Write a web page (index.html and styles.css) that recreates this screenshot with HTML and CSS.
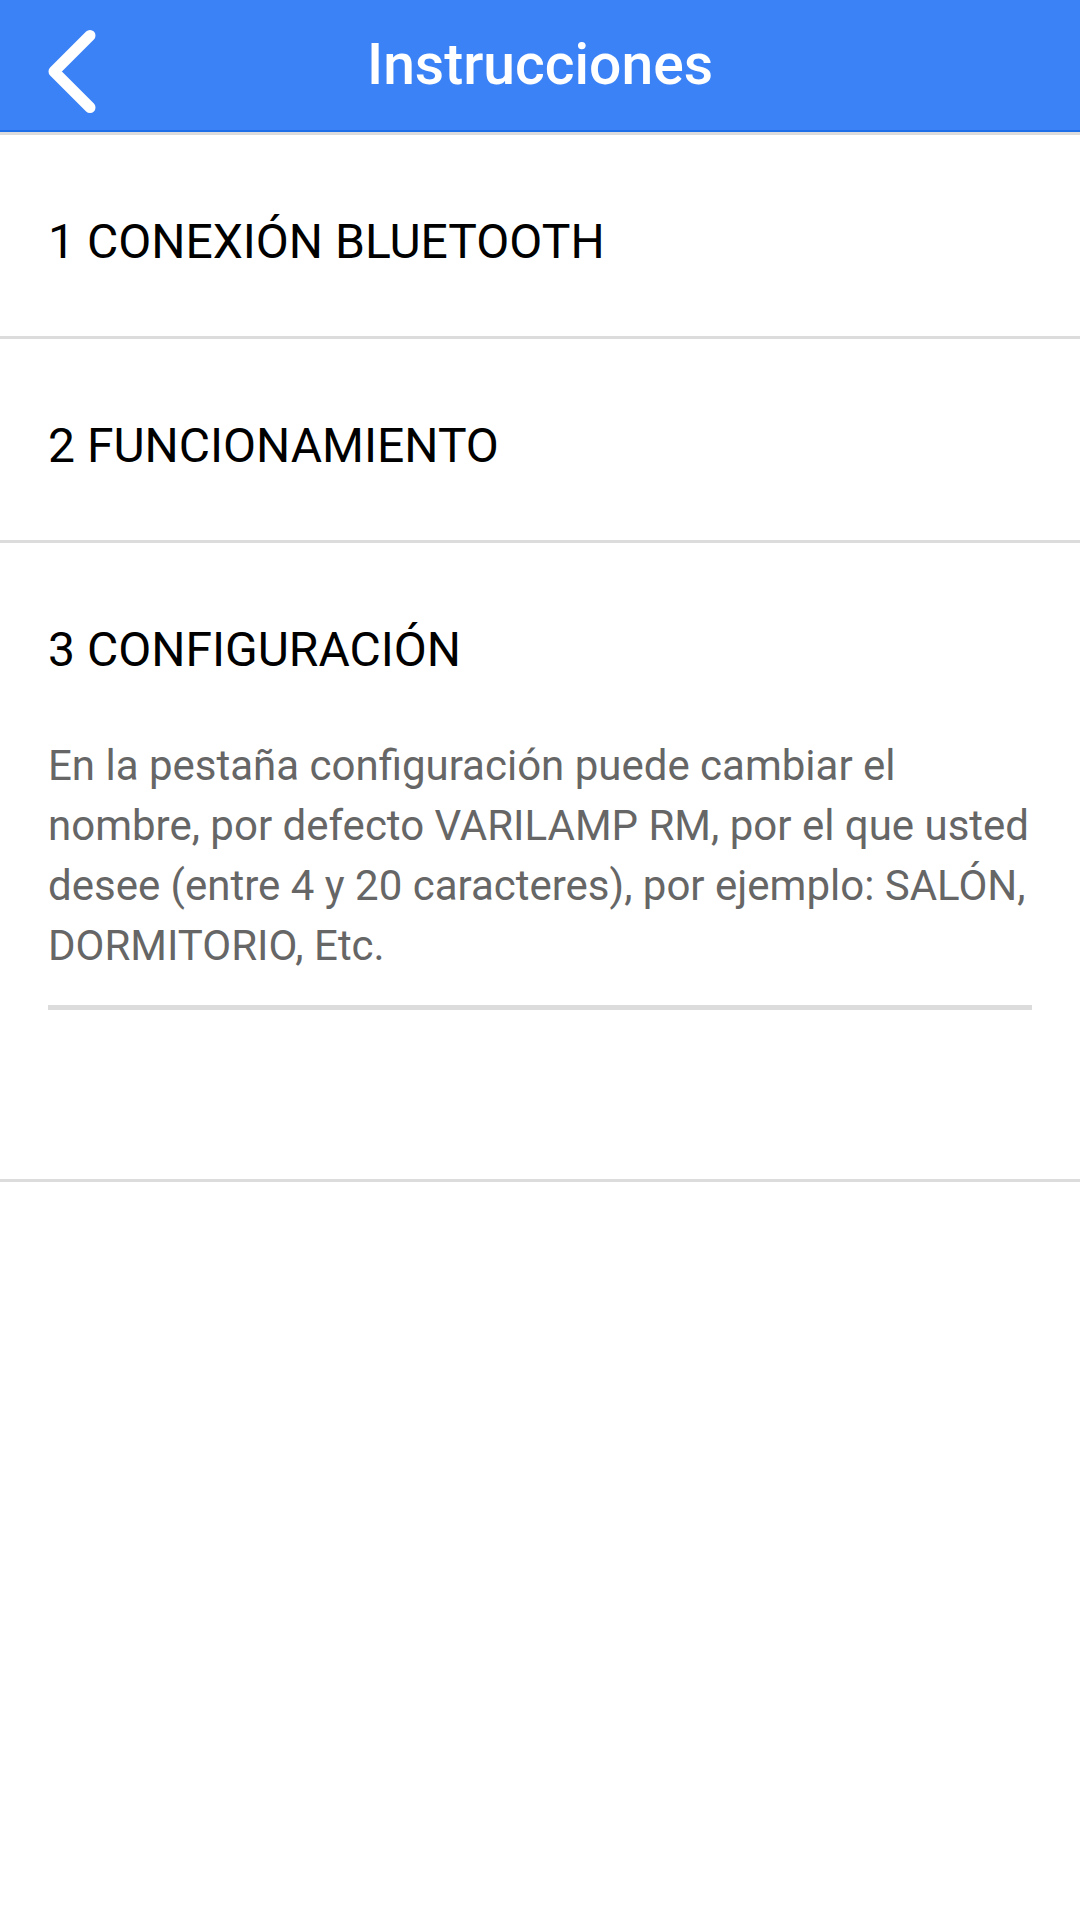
FILE: index.html
```html
<!DOCTYPE html>
<html lang="es">
<head>
<meta charset="utf-8">
<title>Instrucciones</title>
<link rel="stylesheet" href="styles.css">
</head>
<body>
<header class="topbar">
  <div class="back">
    <svg class="back-icon" viewBox="0 0 60 90" width="60" height="90" aria-hidden="true">
      <path d="M50 8.5 L14 44.5 L50 80.5" fill="none" stroke="#ffffff" stroke-width="11" stroke-linecap="round" stroke-linejoin="round"/>
    </svg>
  </div>
  <h1 class="title">Instrucciones</h1>
  <div class="spacer"></div>
</header>
<main class="list">
  <section class="item">
    <h2 class="item-title">1 CONEXIÓN BLUETOOTH</h2>
  </section>
  <section class="item">
    <h2 class="item-title">2 FUNCIONAMIENTO</h2>
  </section>
  <section class="item item-open">
    <h2 class="item-title">3 CONFIGURACIÓN</h2>
    <p class="item-text">En la pestaña configuración puede cambiar el nombre, por defecto VARILAMP RM, por el que usted desee (entre 4 y 20 caracteres), por ejemplo: SALÓN, DORMITORIO, Etc.</p>
    <div class="item-rule"></div>
  </section>
</main>
</body>
</html>
```

FILE: styles.css
```css
html, body {
  margin: 0;
  padding: 0;
  background: #ffffff;
}

body {
  font-family: Roboto, "Noto Sans", "Liberation Sans", sans-serif;
  width: 1080px;
  min-height: 1920px;
}

.topbar {
  display: grid;
  grid-template-columns: 1fr auto 1fr;
  height: 130px;
  background: #3b82f6;
  border-bottom: 2px solid #1f6ee9;
  box-shadow: 0 3px 0 #dcdcdc;
}

.back {
  padding-left: 40px;
  padding-top: 27px;
}

.back-icon {
  display: block;
}

.title {
  margin: 0;
  color: #ffffff;
  font-size: 57px;
  font-weight: 500;
  line-height: 130px;
  letter-spacing: 0;
}

.list {
  margin-top: 3px;
}

.item {
  padding: 79px 40px 66px 48px;
  border-bottom: 3px solid #dcdcdc;
}

.item-title {
  margin: 0;
  font-size: 48px;
  font-weight: 400;
  line-height: 56px;
  color: #000000;
}

.item-open {
  padding-bottom: 169px;
}

.item-text {
  margin: 58px 0 0 0;
  font-size: 42px;
  line-height: 60px;
  color: #666666;
}

.item-rule {
  margin-top: 29px;
  margin-right: 8px;
  height: 5px;
  background: #dcdcdc;
}
```
